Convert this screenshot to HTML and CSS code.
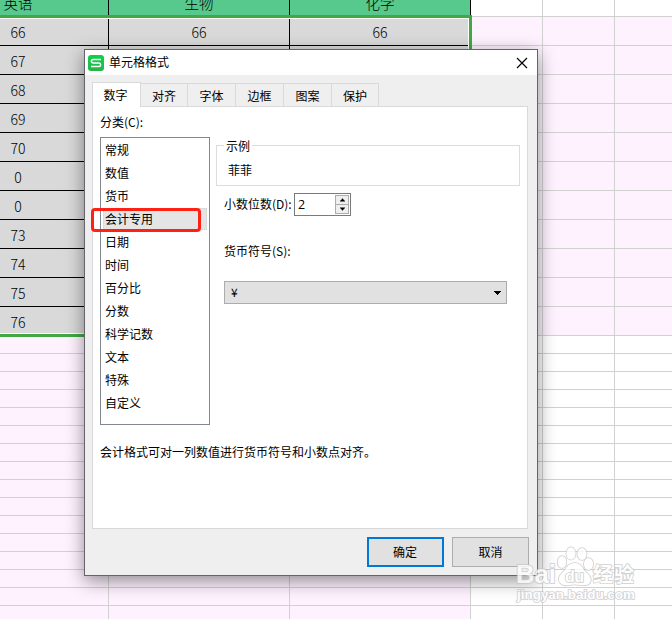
FILE: index.html
```html
<!DOCTYPE html>
<html lang="zh-CN">
<head>
<meta charset="utf-8">
<title>单元格格式</title>
<link rel="stylesheet" href="styles.css">
</head>
<body>
<main class="sheet">
  <div class="row head"><div class="cell h"><span>英语</span></div><div class="cell h"><span>生物</span></div><div class="cell h"><span>化学</span></div><div class="cell"></div><div class="cell"></div><div class="cell"></div></div>
  <div class="row"><div class="cell d">66</div><div class="cell d">66</div><div class="cell d">66</div><div class="cell"></div><div class="cell"></div><div class="cell"></div></div>
  <div class="row"><div class="cell d">67</div><div class="cell d"></div><div class="cell d"></div><div class="cell"></div><div class="cell"></div><div class="cell"></div></div>
  <div class="row"><div class="cell d">68</div><div class="cell d"></div><div class="cell d"></div><div class="cell"></div><div class="cell"></div><div class="cell"></div></div>
  <div class="row"><div class="cell d">69</div><div class="cell d"></div><div class="cell d"></div><div class="cell"></div><div class="cell"></div><div class="cell"></div></div>
  <div class="row"><div class="cell d">70</div><div class="cell d"></div><div class="cell d"></div><div class="cell"></div><div class="cell"></div><div class="cell"></div></div>
  <div class="row"><div class="cell d">0</div><div class="cell d"></div><div class="cell d"></div><div class="cell"></div><div class="cell"></div><div class="cell"></div></div>
  <div class="row"><div class="cell d">0</div><div class="cell d"></div><div class="cell d"></div><div class="cell"></div><div class="cell"></div><div class="cell"></div></div>
  <div class="row"><div class="cell d">73</div><div class="cell d"></div><div class="cell d"></div><div class="cell"></div><div class="cell"></div><div class="cell"></div></div>
  <div class="row"><div class="cell d">74</div><div class="cell d"></div><div class="cell d"></div><div class="cell"></div><div class="cell"></div><div class="cell"></div></div>
  <div class="row"><div class="cell d">75</div><div class="cell d"></div><div class="cell d"></div><div class="cell"></div><div class="cell"></div><div class="cell"></div></div>
  <div class="row"><div class="cell d">76</div><div class="cell d"></div><div class="cell d"></div><div class="cell"></div><div class="cell"></div><div class="cell"></div></div>
  <div class="blank"><div class="col tint"></div><div class="col tint"></div><div class="col tint"></div><div class="col"></div><div class="col"></div><div class="col"></div></div>
  <div class="selection"></div>
</main>

<section class="dialog">
  <header class="titlebar">
    <svg class="logo" viewBox="0 0 16 16"><defs><linearGradient id="g" x2="0" y2="1"><stop stop-color="#0bd24b"/><stop offset="1" stop-color="#27b34a"/></linearGradient></defs><rect width="16" height="16" rx="3" fill="url(#g)"/><path d="M13 4.5H5.2Q3.4 4.5 3.4 6.2T5.2 7.9H11Q12.6 7.9 12.6 9.7T11 11.4H3" fill="none" stroke="#fff" stroke-width="1.5"/></svg>
    <h1>单元格格式</h1>
    <svg class="close" viewBox="0 0 10 10"><path d="M0 0L10 10M10 0L0 10" stroke="#000" stroke-width="1.15"/></svg>
  </header>
  <nav class="tabs"><div class="tab active">数字</div><div class="tab">对齐</div><div class="tab">字体</div><div class="tab">边框</div><div class="tab">图案</div><div class="tab last">保护</div></nav>
  <div class="panel">
    <div class="upper">
      <div class="left">
        <label>分类(C):</label>
        <ul class="list"><li>常规</li><li>数值</li><li>货币</li><li class="on">会计专用</li><li>日期</li><li>时间</li><li>百分比</li><li>分数</li><li>科学记数</li><li>文本</li><li>特殊</li><li>自定义</li></ul>
      </div>
      <div class="right">
        <div class="group"><span class="legend">示例</span><span class="sample">菲菲</span></div>
        <div class="decimals"><label>小数位数(D):</label>
          <div class="spin"><span>2</span><div class="arrows"><svg viewBox="0 0 12 8"><path d="M4 5.5h5v-1h-1v-1h-1v-1h-1v1h-1v1h-1z"/></svg><svg viewBox="0 0 12 8"><path d="M4 2.5h5v1h-1v1h-1v1h-1v-1h-1v-1h-1z"/></svg></div></div>
        </div>
        <label class="symbol">货币符号(S):</label>
        <div class="combo"><span>¥</span><svg viewBox="0 0 7 4"><path d="M0 0h7v1h-1v1h-1v1h-1v1h-1v-1h-1v-1h-1v-1h-1z"/></svg></div>
      </div>
    </div>
    <p class="hint">会计格式可对一列数值进行货币符号和小数点对齐。</p>
  </div>
  <footer class="actions"><div class="btn primary">确定</div><div class="btn">取消</div></footer>
  <div class="marker"></div>
</section>

<svg class="watermark" viewBox="0 0 130 66">
  <g fill="#fff" stroke="#c4c4c4" stroke-width="1.6" paint-order="stroke">
    <ellipse cx="51" cy="22" rx="4.4" ry="6"/><ellipse cx="60" cy="13.5" rx="4.6" ry="6.2"/><ellipse cx="71" cy="14" rx="4.6" ry="6"/><ellipse cx="77.5" cy="24" rx="4.6" ry="6"/>
    <path d="M64 23C56 23 56 29 51 33C44 40 50 47 58 45Q64 44 70 45C80 47 83 39 76 33C71 29 71 23 64 23Z"/>
    <text class="wm-latin" x="5" y="43" textLength="40" lengthAdjust="spacingAndGlyphs">Bai</text>
    <text class="wm-du" x="54" y="42" textLength="19">du</text>
    <text class="wm-cjk" x="82" y="42" textLength="41">经验</text>
    <text class="wm-url" x="6" y="59" textLength="118" lengthAdjust="spacingAndGlyphs">jingyan.baidu.com</text>
  </g>
</svg>
</body>
</html>
```
FILE: styles.css
```css
* { box-sizing: border-box; }
body { margin: 0; width: 672px; height: 619px; overflow: hidden; position: relative; background: #fff; color: #000; font: 12px/16px "Noto Sans CJK SC", sans-serif; }

.sheet { position: relative; width: 759px; margin-left: -72px; }
.row, .blank { display: grid; grid-template: 100% / 181px 181px 181px 72px 72px 72px; }
.row { height: 29px; }
.row.head { height: 17px; }
.cell { background: #fef2ff; border-right: 1px solid #d1d1d1; border-bottom: 1px solid #d1d1d1; }
.head .cell { background: #fff; }
.cell.d, .head .cell.h { display: flex; align-items: center; justify-content: center; border-color: #000; }
.cell.d { background: #d9d9d9; font-size: 14px; font-weight: 300; padding-top: 1px; }
.head .cell.h { background: #57c98c; font-size: 14.5px; font-weight: 300; align-items: flex-end; padding-bottom: 5px; }
.blank { height: 288px; }
.col { border-right: 1px solid #d1d1d1; background: repeating-linear-gradient(transparent 0 17px, #d1d1d1 17px 18px); }
.col.tint { background-color: #fef2ff; }
.selection { position: absolute; left: -4px; top: 15px; width: 548px; height: 322px; border: 3px solid #43a843; box-shadow: inset 0 0 0 1px #fff; }

.dialog { position: absolute; left: 84px; top: 49px; width: 454px; height: 527px; border: 1px solid #68636a; background: #efefef; box-shadow: 0 5px 17px rgba(0, 0, 0, .43); display: flex; flex-direction: column; }
.titlebar { height: 25px; flex: none; background: #fff; display: flex; align-items: center; padding: 0 10px 0 3px; }
.logo { width: 16px; height: 16px; }
h1 { font-size: 12px; font-weight: 400; margin: 0 0 2px 5px; flex: 1; }
.close { width: 10px; height: 10px; overflow: visible; }
.tabs { height: 31px; flex: none; display: flex; align-items: flex-end; padding-left: 7px; }
.tab { width: 48px; height: 23px; border: 1px solid #d9d9d9; border-width: 1px 0 0 1px; text-align: center; line-height: 23px; }
.tab.active { width: 49px; height: 25px; border-right-width: 1px; background: #fff; margin-bottom: -1px; position: relative; padding-right: 2px; line-height: 24px; }
.tab.active + .tab { width: 46px; border-left: 0; }
.tab.last { border-right-width: 1px; }
.panel { height: 423px; flex: none; margin: 0 9px 0 7px; border: 1px solid #d9d9d9; background: #fff; padding: 7px; }
.upper { display: flex; height: 311px; }
.left { width: 110px; }
.left label { display: block; height: 23px; line-height: 16px; }
.list { list-style: none; margin: 0; padding: 1px 2px; width: 110px; height: 288px; border: 1px solid #828790; }
.list li { height: 23px; line-height: 21px; padding-left: 2px; }
.list .on { background: #e5e5e5; border: 1px dotted #d0d0d0; height: 22px; margin-bottom: 1px; line-height: 20px; padding-left: 1px; }
.right { width: 304px; margin-left: 6px; padding-top: 31px; }
.group { height: 41px; border: 1px solid #dcdcdc; display: flex; flex-direction: column; align-items: flex-start; padding-left: 7px; }
.legend { background: #fff; height: 16px; margin-top: -8px; padding: 0 2px; }
.sample { margin: 8px 0 0 4px; }
.decimals { display: flex; align-items: center; padding-left: 8px; margin-top: 7px; height: 23px; }
.decimals label { width: 70px; white-space: nowrap; padding-bottom: 1px; }
.spin { width: 57px; height: 23px; border: 1px solid #7a7a7a; display: flex; justify-content: space-between; align-items: center; padding: 0 1px 0 3px; }
.spin > span { font: 12.5px/18px "Open Sans", sans-serif; }
.arrows { width: 14px; height: 19px; display: flex; flex-direction: column; }
.arrows svg { width: 14px; height: 10px; border: 1px solid #acacac; background: #efefef; }
.arrows svg + svg { margin-top: -1px; }
.symbol { display: block; margin: 27px 0 0 8px; }
.combo { width: 283px; height: 23px; margin: 22px 0 0 8px; border: 1px solid #acacac; background: #e1e1e1; display: flex; align-items: center; justify-content: space-between; padding: 0 5px 0 6px; }
.combo span { padding-bottom: 2px; }
.combo svg { width: 7px; height: 4px; }
.hint { margin: 19px 0 0; }
.actions { display: flex; justify-content: flex-end; gap: 8px; padding: 8px 8px 0 0; }
.btn { width: 77px; height: 30px; border: 1px solid #adadad; background: #e1e1e1; text-align: center; line-height: 27px; }
.btn.primary { border: 2px solid #0078d7; line-height: 25px; padding-right: 1px; }
.marker { position: absolute; left: 6px; top: 158px; width: 110px; height: 24px; border: 3px solid #ff2214; border-radius: 4px; }

.watermark { position: absolute; left: 511px; top: 540px; width: 130px; height: 66px; opacity: .8; }
.wm-latin { font: 700 25px "Liberation Sans", sans-serif; }
.wm-du { font: 700 16px "Liberation Sans", sans-serif; }
.wm-cjk { font: 700 20px "Noto Sans CJK SC", sans-serif; }
.wm-url { font: 700 13px "Liberation Sans", sans-serif; }
```
